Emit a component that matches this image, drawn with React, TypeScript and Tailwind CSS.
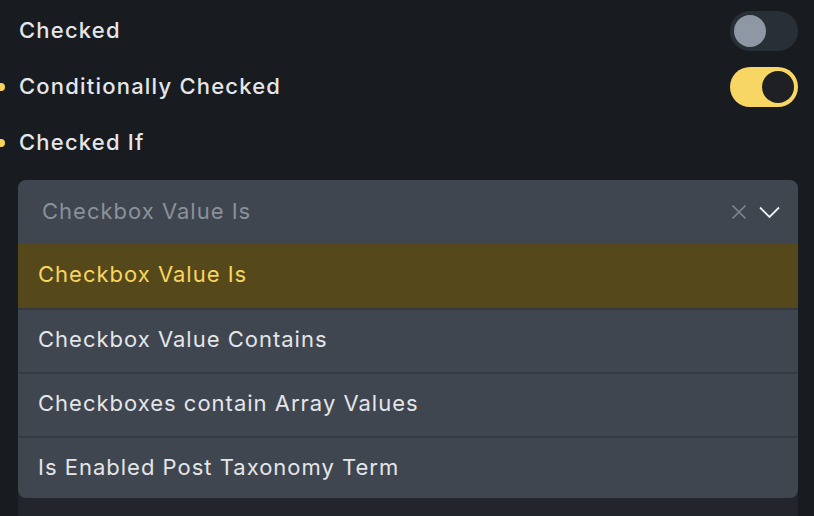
import React from 'react';

const OPTIONS = [
  'Checkbox Value Is',
  'Checkbox Value Contains',
  'Checkboxes contain Array Values',
  'Is Enabled Post Taxonomy Term',
];

function Toggle({ on }: { on: boolean }) {
  return (
    <div
      className={`flex h-[40px] w-[68px] items-center rounded-full px-[4px] ${
        on ? 'justify-end bg-[#f8d664]' : 'justify-start bg-[#292f37]'
      }`}
    >
      <div className={`h-[32px] w-[32px] rounded-full ${on ? 'bg-[#1f2023]' : 'bg-[#8e98a5]'}`} />
    </div>
  );
}

function FieldRow({ label, dot, toggle }: { label: string; dot?: boolean; toggle?: boolean | null }) {
  return (
    <div className="relative flex h-[40px] items-center justify-between">
      {dot && <span className="absolute left-[-22px] top-1/2 h-[8px] w-[8px] -translate-y-1/2 rounded-full bg-[#f8d35c]" />}
      <span className="-mt-[1px] text-[22px] font-medium tracking-[1.2px] text-[#e4e6ea]">{label}</span>
      {toggle !== undefined && toggle !== null && <Toggle on={toggle} />}
    </div>
  );
}

export default function App() {
  return (
    <div
      className="h-[516px] w-[814px] overflow-hidden bg-[#181b1f] pl-[18px] pr-[16px] pt-[11px]"
      style={{ fontFamily: 'Inter, "Noto Sans", sans-serif' }}
    >
      <div className="flex flex-col gap-[16px] pl-[1px]">
        <FieldRow label="Checked" toggle={false} />
        <FieldRow label="Conditionally Checked" dot toggle={true} />
        <FieldRow label="Checked If" dot />
      </div>

      {/* Select with open menu */}
      <div className="relative mt-[17px]">
        <div className="flex h-[64px] items-center justify-between rounded-t-lg bg-[#3f4650] pl-[24px] pr-[18px]">
          <span className="-mt-[1px] text-[22px] tracking-[1px] text-[#8a919b]">Checkbox Value Is</span>
          <div className="flex items-center gap-[12px]">
            <svg className="h-[16px] w-[16px]" viewBox="0 0 16 16" fill="none" stroke="#7f8690" strokeWidth={1.6}>
              <path d="M1.5 1.5l13 13M14.5 1.5l-13 13" />
            </svg>
            <svg className="h-[12px] w-[21px]" viewBox="0 0 21 12" fill="none" stroke="#eef0f2" strokeWidth={1.8}>
              <path d="M1 1.5l9.5 9.5 9.5-9.5" />
            </svg>
          </div>
        </div>

        <div className="absolute left-0 right-0 top-[64px] z-10 h-[254px] overflow-hidden rounded-b-lg bg-[#3f4650]">
          {OPTIONS.map((opt, i) => (
            <div
              key={opt}
              className={`flex h-[64px] items-center pb-[3px] pl-[20px] text-[22px] tracking-[1px] ${
                i === 0
                  ? 'bg-[#55491c] text-[#f8d55e]'
                  : 'border-t-2 border-[#363b43] text-[#e3e5e9]'
              }`}
            >
              {opt}
            </div>
          ))}
        </div>

        {/* next field, mostly covered by the menu */}
        <div className="mt-[20px] h-[300px] rounded-lg bg-[#22262c]" />
      </div>
    </div>
  );
}
